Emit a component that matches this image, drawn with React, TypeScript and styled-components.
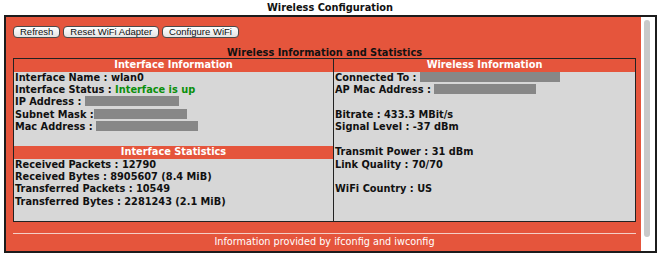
import React from "react";
import styled, { createGlobalStyle } from "styled-components";

const GlobalStyle = createGlobalStyle`
  body {
    margin: 0;
    background: #fff;
    font-family: "DejaVu Sans", Verdana, sans-serif;
  }
`;

const ORANGE = "#e5553c";

const Page = styled.div`
  width: 660px;
  height: 261px;
`;

const Title = styled.h1`
  margin: 0;
  height: 15px;
  line-height: 16px;
  font-size: 9.8px;
  font-weight: bold;
  text-align: center;
  color: #111;
`;

const Frame = styled.div`
  margin-left: 4px;
  width: 649px;
  height: 234px;
  border: 2px solid #1c1c1c;
  display: flex;
`;

const Content = styled.div`
  flex: 1;
  background: ${ORANGE};
  padding: 9px 5px 0 7px;
  display: flex;
  flex-direction: column;
`;

const ScrollTrack = styled.div`
  width: 14px;
  background: #fff;
  padding: 3px 0 14px 3px;
  box-sizing: border-box;
`;

const ScrollThumb = styled.div`
  width: 6px;
  height: 100%;
  border-radius: 3px;
  background: #c9c9c9;
`;

const Toolbar = styled.div`
  display: flex;
  gap: 3px;
`;

const Button = styled.button`
  height: 12px;
  padding: 0 6px;
  border: 1px solid #4a4a4a;
  border-radius: 4px;
  background: linear-gradient(#ffffff, #e4e4e4);
  font-family: "Liberation Sans", Arial, sans-serif;
  font-size: 9.5px;
  line-height: 10px;
  color: #111;
  box-sizing: border-box;
`;

const SectionTitle = styled.h2`
  margin: 8px 0 0;
  height: 12px;
  line-height: 13px;
  font-size: 9.8px;
  font-weight: bold;
  text-align: center;
  color: #111;
`;

const InfoTable = styled.div`
  display: grid;
  grid-template-columns: 320px 1fr;
  border: 1px solid #222;
  font-size: 9.8px;
  font-weight: bold;
  line-height: 12.45px;
  color: #111;
`;

const HeadCell = styled.div<{ $divider?: boolean }>`
  background: ${ORANGE};
  color: #fff;
  text-align: center;
  height: 12.5px;
  border-right: ${(p) => (p.$divider ? "1px solid #222" : "none")};
`;

const BodyCell = styled.div<{ $divider?: boolean }>`
  background: #d7d7d7;
  padding: 0 0 12.5px 1px;
  border-right: ${(p) => (p.$divider ? "1px solid #222" : "none")};
`;

const Line = styled.div`
  height: 12.45px;
  white-space: nowrap;
`;

const Band = styled.div`
  background: ${ORANGE};
  color: #fff;
  text-align: center;
  height: 12.45px;
  margin-left: -1px;
`;

const Status = styled.span`
  color: #0b8f0b;
`;

const Masked = styled.span<{ $w: number }>`
  display: inline-block;
  width: ${(p) => p.$w}px;
  height: 10px;
  background: #878787;
  vertical-align: -1px;
`;

const Rule = styled.hr`
  margin: 11px 0 0;
  border: none;
  height: 1px;
  background: #f4cfc7;
`;

const Footer = styled.div`
  text-align: center;
  color: #fff;
  font-size: 9.7px;
  line-height: 13px;
  margin-top: 1px;
`;

export default function App() {
  return (
    <Page>
      <GlobalStyle />
      <Title>Wireless Configuration</Title>
      <Frame>
        <Content>
          <Toolbar>
            <Button>Refresh</Button>
            <Button>Reset WiFi Adapter</Button>
            <Button>Configure WiFi</Button>
          </Toolbar>
          <SectionTitle>Wireless Information and Statistics</SectionTitle>
          <InfoTable>
            <HeadCell $divider>Interface Information</HeadCell>
            <HeadCell>Wireless Information</HeadCell>
            <BodyCell $divider>
              <Line>Interface Name : wlan0</Line>
              <Line>
                Interface Status : <Status>Interface is up</Status>
              </Line>
              <Line>
                IP Address : <Masked $w={94} />
              </Line>
              <Line>
                Subnet Mask :<Masked $w={93} />
              </Line>
              <Line>
                Mac Address : <Masked $w={102} />
              </Line>
              <Line />
              <Band>Interface Statistics</Band>
              <Line>Received Packets : 12790</Line>
              <Line>Received Bytes : 8905607 (8.4 MiB)</Line>
              <Line>Transferred Packets : 10549</Line>
              <Line>Transferred Bytes : 2281243 (2.1 MiB)</Line>
            </BodyCell>
            <BodyCell>
              <Line>
                Connected To : <Masked $w={140} />
              </Line>
              <Line>
                AP Mac Address : <Masked $w={102} />
              </Line>
              <Line />
              <Line>Bitrate : 433.3 MBit/s</Line>
              <Line>Signal Level : -37 dBm</Line>
              <Line />
              <Line>Transmit Power : 31 dBm</Line>
              <Line>Link Quality : 70/70</Line>
              <Line />
              <Line>WiFi Country : US</Line>
            </BodyCell>
          </InfoTable>
          <Rule />
          <Footer>Information provided by ifconfig and iwconfig</Footer>
        </Content>
        <ScrollTrack>
          <ScrollThumb />
        </ScrollTrack>
      </Frame>
    </Page>
  );
}
